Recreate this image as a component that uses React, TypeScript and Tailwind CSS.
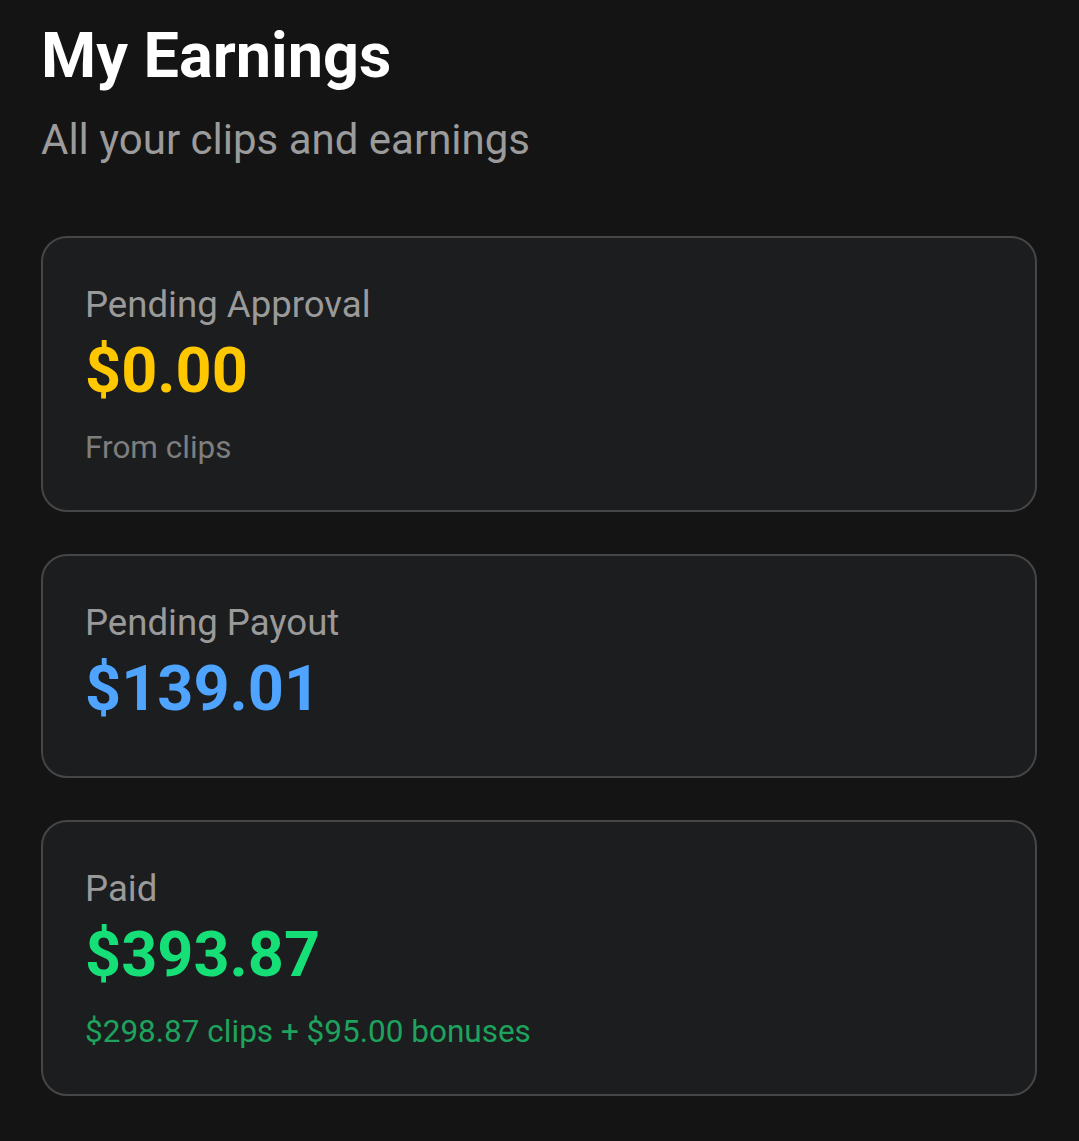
import React from "react";

export default function App() {
  return (
    <div
      className="min-h-[1141px] w-full bg-[#141414] pl-[41px] pr-[42px] pt-[20px]"
      style={{ fontFamily: "Roboto, 'Noto Sans', sans-serif" }}
    >
      <h1 className="text-[63px] leading-[72px] font-bold text-white">My Earnings</h1>
      <p className="mt-[24px] text-[42px] leading-[48px] text-[#9b9b9b]">All your clips and earnings</p>

      <div className="mt-[72px] flex flex-col gap-[42px]">
        <div className="rounded-[26px] border-2 border-[#464646] bg-[#1c1d1f] pl-[42px] pr-[43px] pt-[45px] pb-[42px]">
          <div className="text-[36.6px] leading-[44px] text-[#9a9a9a]">Pending Approval</div>
          <div className="mt-[8px] text-[63px] leading-[72px] font-bold text-[#ffc700]">$0.00</div>
          <div className="mt-[21px] text-[31.5px] leading-[40px] text-[#7e7e7e]">From clips</div>
        </div>

        <div className="rounded-[26px] border-2 border-[#464646] bg-[#1c1d1f] pl-[42px] pr-[43px] pt-[45px] pb-[51px]">
          <div className="text-[36.6px] leading-[44px] text-[#9a9a9a]">Pending Payout</div>
          <div className="mt-[8px] text-[63px] leading-[72px] font-bold text-[#4ea4ff]">$139.01</div>
        </div>

        <div className="rounded-[26px] border-2 border-[#464646] bg-[#1c1d1f] pl-[42px] pr-[43px] pt-[45px] pb-[42px]">
          <div className="text-[36.6px] leading-[44px] text-[#9a9a9a]">Paid</div>
          <div className="mt-[8px] text-[63px] leading-[72px] font-bold text-[#17df78]">$393.87</div>
          <div className="mt-[21px] text-[31.5px] leading-[40px] text-[#1ea35d]">$298.87 clips + $95.00 bonuses</div>
        </div>
      </div>
    </div>
  );
}
